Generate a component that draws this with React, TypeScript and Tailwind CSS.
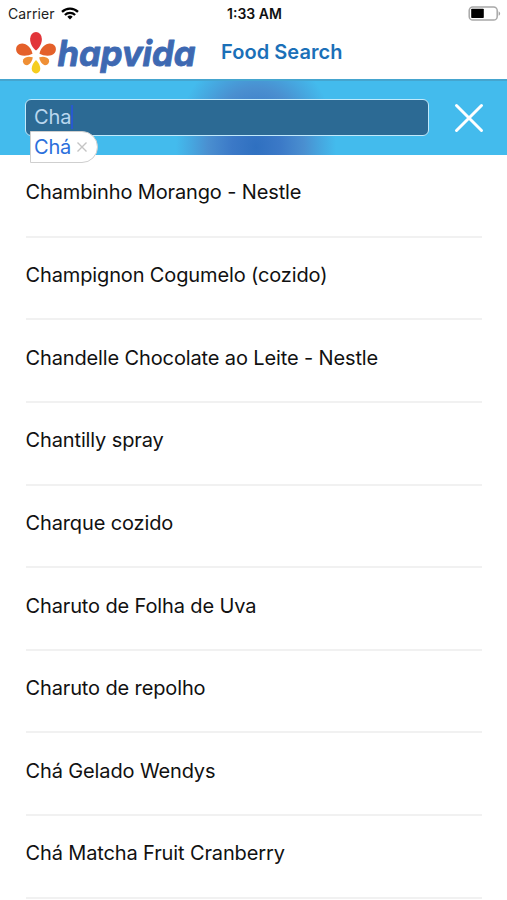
import { useState } from 'react'

const foods = [
  'Chambinho Morango - Nestle',
  'Champignon Cogumelo (cozido)',
  'Chandelle Chocolate ao Leite - Nestle',
  'Chantilly spray',
  'Charque cozido',
  'Charuto de Folha de Uva',
  'Charuto de repolho',
  'Chá Gelado Wendys',
  'Chá Matcha Fruit Cranberry',
]

function WifiIcon() {
  return (
    <svg viewBox="0 0 18 13" className="w-[18px] h-[13px]" fill="none" stroke="#000" strokeWidth="2.3">
      <path d="M1 4.9a11.5 11.5 0 0 1 16 0" />
      <path d="M3.9 8a7.4 7.4 0 0 1 10.2 0" />
      <path d="M9 12.4 6.3 9.7a4 4 0 0 1 5.4 0Z" fill="#000" stroke="none" />
    </svg>
  )
}

function BatteryIcon() {
  return (
    <svg viewBox="0 0 33 15" className="w-[33px] h-[15px]">
      <rect x="1.2" y="0.9" width="28" height="13.2" rx="3.6" fill="#fff" stroke="#a8a8a8" strokeWidth="1.5" />
      <rect x="3.2" y="2.8" width="12.6" height="9.2" rx="0.8" fill="#000" />
      <path d="M30.6 5.2a2.5 2.5 0 0 1 0 4.6Z" fill="#a3a3a3" />
    </svg>
  )
}

function Logo() {
  return (
    <svg viewBox="0 0 184 49" className="w-[184px] h-[49px] shrink-0 overflow-visible">
      <path d="M21 20.5c-3.4-2.5-5.9-7-5.9-11.5a5.900 6.900 0 0 1 11.800 0c0 4.500-2.500 9-5.900 11.500Z" fill="#e2353a" />
      <path d="M17.500 23.700C14 25.800 8 26.300 5 24.900A5.900 5.900 0 0 1 4.500 14C9.500 11.500 16.500 17 17.500 23.700Z" fill="#e4602a" />
      <path d="M24.500 23.700C28 25.800 34 26.300 37 24.900A5.900 5.900 0 0 0 37.500 14C32.500 11.500 25.500 17 24.500 23.700Z" fill="#e4602a" />
      <path d="M17.700 27.300C17.500 31 14.800 34.800 11.800 35.300a4.200 4.200 0 0 1-3.600-5.900C10 26.500 14.500 26.100 17.700 27.300Z" fill="#ef8f35" />
      <path d="M24.300 27.300C24.500 31 27.200 34.800 30.200 35.300a4.200 4.200 0 0 0 3.600-5.900C32 26.500 27.500 26.100 24.300 27.300Z" fill="#ef8f35" />
      <path d="M21 30c2.400 2.200 4.300 5.800 4.300 8.700a4.300 4.700 0 0 1-8.600 0c0-2.900 1.900-6.500 4.300-8.700Z" fill="#f5cd1e" />
      <text
        x="42.500"
        y="35.500"
        textLength="138"
        lengthAdjust="spacingAndGlyphs"
        fontSize="35"
        fill="#3e69b2"
        stroke="#3e69b2"
        strokeWidth="0.9"
        strokeLinejoin="round"
        className="font-['Inter',sans-serif] font-bold italic [font-feature-settings:'cv11','ss03']"
      >
        hapvida
      </text>
    </svg>
  )
}

export default function App() {
  const [query, setQuery] = useState('Cha')

  return (
    <div className="flex h-[900px] w-[507px] flex-col overflow-hidden bg-white font-['Inter',sans-serif] text-[#111]">
      {/* Status bar */}
      <div className="grid h-7 shrink-0 grid-cols-3 items-center pb-0.5 pl-2 pr-1.5">
        <div className="flex items-center gap-1.5">
          <span className="text-[14px] tracking-[0.1px] text-[#222]">Carrier</span>
          <WifiIcon />
        </div>
        <span className="text-center text-[14px] font-semibold">1:33 AM</span>
        <div className="flex justify-end">
          <BatteryIcon />
        </div>
      </div>

      {/* Header */}
      <header className="flex h-[51px] shrink-0 items-start gap-[22px] pl-[15px] pt-0.5">
        <Logo />
        <h1 className="pt-2 text-[20px] leading-7 font-semibold tracking-[0.06px] text-[#1b70b8]">Food Search</h1>
      </header>

      {/* Search */}
      <div className="relative flex h-[76px] shrink-0 items-center border-t-2 border-[#45a5cf] bg-[#43bbed] pb-0.5 pl-[25px] pr-[22px]">
        <div className="absolute inset-0 bg-[radial-gradient(ellipse_80px_98px_at_256px_66px,#2f70c0_0%,#3b79c7_30%,#4a8fd0_60%,#46a6df_80%,#43bbed00_100%)]" />
        <div className="relative flex h-[37px] w-[404px] items-center rounded-md border-[1.5px] border-[#c1e9fb] bg-[#2c6a94] pl-2">
          <button onClick={() => setQuery('Cha')} className="text-[20px] leading-7 tracking-[-0.1px] text-[#b9d7ee]">
            {query}
          </button>
          <span className="h-6 w-0.5 bg-[#2859cf]" />
        </div>
        <button onClick={() => setQuery('')} className="relative ml-auto pt-0.5">
          <svg viewBox="0 0 32 32" className="h-8 w-8" stroke="#fff" strokeWidth="3" strokeLinecap="round">
            <path d="M3.5 3.5 28.5 28.5M28.5 3.5 3.5 28.5" />
          </svg>
        </button>
        {/* Autocorrect bubble */}
        <div className="absolute left-[30px] top-[50px] flex h-8 w-[68px] items-center gap-1.5 rounded-r-full border border-[#cfcfcf] bg-white pl-[3px]">
          <span className="text-[20px] tracking-[-0.2px] text-[#2b6fdc]">Chá</span>
          <svg viewBox="0 0 10 10" className="h-2.5 w-2.5" stroke="#c4c4c4" strokeWidth="1.4">
            <path d="M0.5 0.5 9.5 9.5M9.5 0.5 0.5 9.5" />
          </svg>
        </div>
      </div>

      {/* Results */}
      <ul className="pl-[25.5px] pr-[25px]">
        {foods.map((food) => (
          <li key={food} className="flex h-[82.65px] items-center border-b-2 border-[#f1f1f1] pb-1.5 text-[20px] tracking-[-0.13px]">
            {food}
          </li>
        ))}
      </ul>
    </div>
  )
}
